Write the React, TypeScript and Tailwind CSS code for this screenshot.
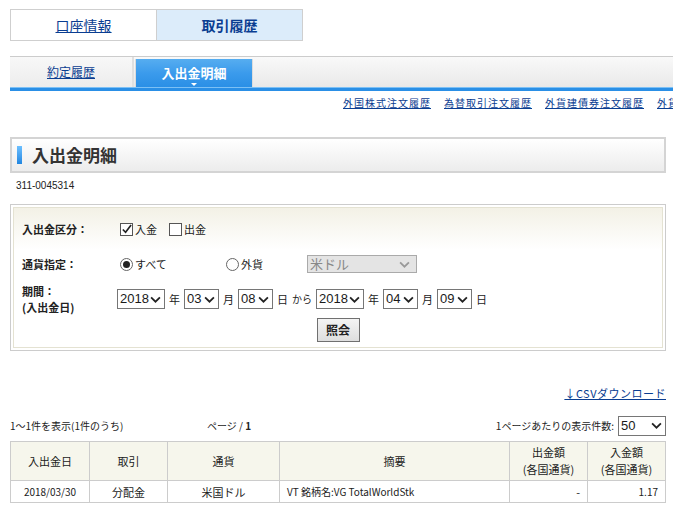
import React from "react";

const font = { fontFamily: '"MS PGothic", "Noto Sans CJK JP", "Liberation Sans", sans-serif' };

const Chevron = ({ className = "" }: { className?: string }) => (
  <svg viewBox="0 0 10 6" className={className} fill="none" stroke="currentColor" strokeWidth="1.6">
    <path d="M1 1l4 4 4-4" />
  </svg>
);

const Sel = ({ value, w }: { value: string; w: string }) => (
  <div className={`flex h-[20px] items-center justify-between border border-[#767676] bg-white pl-[2px] pr-[3px] text-[13px] leading-[18px] text-[#1a1a1a] ${w}`}>
    <span style={{ fontFamily: '"Liberation Sans", sans-serif' }}>{value}</span>
    <Chevron className="h-[7px] w-[11px] text-[#222]" />
  </div>
);

const Check = ({ checked }: { checked?: boolean }) => (
  <span className="relative inline-block h-[13px] w-[13px] border border-[#555] bg-white">
    {checked && (
      <svg viewBox="0 0 12 12" className="absolute left-0 top-0 h-[11px] w-[11px]">
        <path d="M2 6l3 3 6-8" fill="none" stroke="#222" strokeWidth="1.8" />
      </svg>
    )}
  </span>
);

const Radio = ({ checked }: { checked?: boolean }) => (
  <span className="flex h-[13px] w-[13px] items-center justify-center rounded-full border border-[#666] bg-white">
    {checked && <span className="h-[7px] w-[7px] rounded-full bg-[#222]" />}
  </span>
);

export default function App() {
  return (
    <div className="h-[506px] w-[673px] overflow-hidden bg-white leading-[14px] text-[#222]" style={font}>
      {/* main tabs */}
      <div className="ml-[10px] mt-[9px] flex h-[32px] w-[293px] border border-[#cfcfcf]">
        <div className="flex flex-1 items-center justify-center border-r border-[#cfcfcf] bg-white">
          <a className="text-[14px] text-[#0a3d91] underline">口座情報</a>
        </div>
        <div className="flex flex-1 items-center justify-center bg-[#dcecfa]">
          <span className="text-[14px] font-bold text-[#0a3d91]">取引履歴</span>
        </div>
      </div>

      {/* sub tabs */}
      <div className="ml-[10px] mt-[15px] h-[35px] border-t border-[#cccccc] bg-gradient-to-b from-[#f9f9f9] via-[#f0f0f0] to-[#e6e6e6]">
        <div className="flex h-[30px] items-end">
          <div className="flex h-[30px] w-[124px] items-center justify-center border-r-2 border-[#e0e0e0] bg-gradient-to-b from-[#f8f8f8] to-[#ececec]">
            <a className="text-[12px] text-[#0a3d91] underline">約定履歴</a>
          </div>
          <div className="relative ml-[1px] flex h-[28px] w-[118px] items-center justify-center border-x border-[#dcdcdc] bg-gradient-to-b from-[#56adf0] via-[#3b9bec] to-[#2a8fe6]">
            <span className="text-[13px] font-bold text-white">入出金明細</span>
            <span className="absolute bottom-[1px] left-1/2 h-0 w-0 -translate-x-1/2 border-x-[3px] border-t-[3px] border-x-transparent border-t-white" />
          </div>
        </div>
        <div className="h-[4px] border-t border-[#7cc0f5] bg-[#2a8fe6]" />
      </div>

      {/* links */}
      <div className="mt-[5px] flex h-[14px] items-center gap-[13px] whitespace-nowrap pl-[343px] text-[10px] tracking-[1px] text-[#0a3d91]">
        <a className="underline">外国株式注文履歴</a>
        <a className="underline">為替取引注文履歴</a>
        <a className="underline">外貨建債券注文履歴</a>
        <a className="underline">外貨建投信注文履歴</a>
      </div>

      {/* title */}
      <div className="ml-[10px] mt-[27px] flex h-[36px] w-[656px] items-center border-2 border-[#d4d4d4] bg-gradient-to-b from-white to-[#ececec] pl-[5px]">
        <span className="h-[18px] w-[5px] bg-gradient-to-b from-[#6cc0ff] to-[#1f86e0]" />
        <span className="ml-[10px] text-[17px] font-bold leading-[20px] text-[#333]">入出金明細</span>
      </div>

      <div className="ml-[16px] mt-[6px] h-[14px] text-[10px]" style={{ fontFamily: '"Liberation Sans", sans-serif' }}>
        311-0045314
      </div>

      {/* search form */}
      <div className="ml-[10px] mt-[11px] h-[147px] w-[656px] border border-[#cccccc] p-[2px]">
        <div className="h-full border border-[#e4e2d2] text-[11px]">
          <div className="flex h-[42px] items-center bg-gradient-to-b from-[#f3f1e6] to-white">
            <span className="w-[106px] pl-[8px] font-bold">入出金区分：</span>
            <label className="flex items-center gap-[2px]">
              <Check checked />
              入金
            </label>
            <label className="ml-[12px] flex items-center gap-[2px]">
              <Check />
              出金
            </label>
          </div>
          <div className="flex h-[28px] items-center">
            <span className="w-[106px] pl-[8px] font-bold">通貨指定：</span>
            <label className="flex w-[106px] items-center gap-[2px]">
              <Radio checked />
              すべて
            </label>
            <label className="flex w-[81px] items-center gap-[2px]">
              <Radio />
              外貨
            </label>
            <div className="flex h-[18px] w-[110px] items-center justify-between border border-[#aaa] bg-[#e4e4e4] pl-[2px] pr-[6px] text-[13px] text-[#888]">
              米ドル
              <Chevron className="h-[7px] w-[11px] text-[#999]" />
            </div>
          </div>
          <div className="mt-[5px] flex h-[32px] items-center">
            <div className="w-[103px] pl-[8px] font-bold leading-[16px]">
              期間：
              <br />
              (入出金日)
            </div>
            <div className="flex items-center gap-[4px]">
              <Sel value="2018" w="w-[48px]" />
              <span>年</span>
              <Sel value="03" w="w-[35px]" />
              <span>月</span>
              <Sel value="08" w="w-[35px]" />
              <span>日</span>
              <span className="text-[10px]">から</span>
              <Sel value="2018" w="w-[48px]" />
              <span>年</span>
              <Sel value="04" w="w-[35px]" />
              <span>月</span>
              <Sel value="09" w="w-[35px]" />
              <span>日</span>
            </div>
          </div>
          <div className="flex justify-center pt-[3px]">
            <button className="h-[24px] w-[43px] border border-[#707070] bg-gradient-to-b from-[#f4f4f4] to-[#dedede] text-[12px] font-bold">
              照会
            </button>
          </div>
        </div>
      </div>

      {/* csv */}
      <div className="mt-[35px] flex h-[14px] w-[666px] justify-end text-[11px] tracking-[0.5px] text-[#0a3d91]">
        <a className="underline">↓CSVダウンロード</a>
      </div>

      {/* paging row */}
      <div className="ml-[10px] mt-[16px] flex h-[19px] w-[656px] items-center text-[10px]">
        <span className="w-[197px]">1～1件を表示(1件のうち)</span>
        <span>
          ページ / <b>1</b>
        </span>
        <span className="ml-auto mr-[4px]">1ページあたりの表示件数:</span>
        <Sel value="50" w="w-[48px]" />
      </div>

      {/* table */}
      <table className="ml-[10px] mt-[6px] w-[656px] border-collapse text-[11px]">
        <thead>
          <tr className="h-[39px] bg-[#f6f6ec]">
            <th className="w-[79px] border border-[#cccccc] font-normal">入出金日</th>
            <th className="w-[78px] border border-[#cccccc] font-normal">取引</th>
            <th className="w-[112px] border border-[#cccccc] font-normal">通貨</th>
            <th className="w-[230px] border border-[#cccccc] font-normal">摘要</th>
            <th className="w-[78px] border border-[#cccccc] font-normal leading-[17px]">
              出金額
              <br />
              (各国通貨)
            </th>
            <th className="border border-[#cccccc] font-normal leading-[17px]">
              入金額
              <br />
              (各国通貨)
            </th>
          </tr>
        </thead>
        <tbody>
          <tr className="h-[22px]">
            <td className="border border-[#cccccc] text-center text-[10px]">2018/03/30</td>
            <td className="border border-[#cccccc] text-center">分配金</td>
            <td className="border border-[#cccccc] text-center">米国ドル</td>
            <td className="border border-[#cccccc] pl-[7px] text-[10px]">VT 銘柄名:VG TotalWorldStk</td>
            <td className="border border-[#cccccc] pr-[7px] text-right">-</td>
            <td className="border border-[#cccccc] pr-[7px] text-right text-[10px]">1.17</td>
          </tr>
        </tbody>
      </table>
    </div>
  );
}
